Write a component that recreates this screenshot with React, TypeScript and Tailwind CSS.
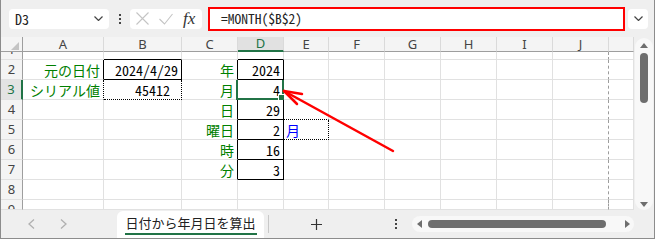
import React from "react";

const cellFont = "font-['Noto_Sans_Mono_CJK_JP','Noto_Sans_CJK_JP',monospace]";
const uiFont = "font-['Noto_Sans','Noto_Sans_CJK_JP',sans-serif]";

const R_GRID = "border-r-[#e1e1e1]";
const B_GRID = "border-b-[#e1e1e1]";
const R_BLACK = "border-r-black";
const B_BLACK = "border-b-black";
const R_DOT = "border-r-black [border-right-style:dotted]!";
const B_DOT = "border-b-black [border-bottom-style:dotted]!";
const R_DASH = "border-r-[#9c9c9c] [border-right-style:dashed]!";

const cols = [
  { key: "A", w: "w-[81px]" },
  { key: "B", w: "w-[78px]" },
  { key: "C", w: "w-[56px]" },
  { key: "D", w: "w-[46px]" },
  { key: "E", w: "w-[45px]" },
  { key: "F", w: "w-[56px]" },
  { key: "G", w: "w-[56px]" },
  { key: "H", w: "w-[56px]" },
  { key: "I", w: "w-[56px]" },
  { key: "J", w: "w-[56px]" },
  { key: "K", w: "w-[25px]" },
];

const rows = [
  { n: 1, h: "h-[8px]", clip: "justify-end" },
  { n: 2, h: "h-[20px]", clip: "justify-center" },
  { n: 3, h: "h-[20px]", clip: "justify-center" },
  { n: 4, h: "h-[20px]", clip: "justify-center" },
  { n: 5, h: "h-[20px]", clip: "justify-center" },
  { n: 6, h: "h-[20px]", clip: "justify-center" },
  { n: 7, h: "h-[20px]", clip: "justify-center" },
  { n: 8, h: "h-[20px]", clip: "justify-center" },
  { n: 9, h: "h-[10px]", clip: "justify-start" },
];

type Cell = {
  text?: string;
  tone?: "green" | "blue";
  left?: boolean;
  pr?: string;
  r?: string;
  b?: string;
  sel?: boolean;
};

const cells: Record<string, Cell> = {
  B1: { b: B_BLACK },
  D1: { b: B_BLACK },
  A2: { text: "元の日付", tone: "green", r: R_BLACK },
  B2: { text: "2024/4/29", r: R_BLACK, b: B_BLACK },
  C2: { text: "年", tone: "green", r: R_BLACK },
  D2: { text: "2024", r: R_BLACK, b: B_BLACK },
  A3: { text: "シリアル値", tone: "green", r: R_DOT },
  B3: { text: "45412", pr: "pr-[11px]", r: R_DOT, b: B_DOT },
  C3: { text: "月", tone: "green", r: R_BLACK },
  D3: { text: "4", r: R_BLACK, b: B_BLACK, sel: true },
  C4: { text: "日", tone: "green", r: R_BLACK },
  D4: { text: "29", r: R_BLACK, b: B_BLACK },
  E4: { b: B_DOT },
  C5: { text: "曜日", tone: "green", r: R_BLACK },
  D5: { text: "2", r: R_BLACK, b: B_BLACK },
  E5: { text: "月", tone: "blue", left: true, r: R_DOT, b: B_DOT },
  C6: { text: "時", tone: "green", r: R_BLACK },
  D6: { text: "16", r: R_BLACK, b: B_BLACK },
  C7: { text: "分", tone: "green", r: R_BLACK },
  D7: { text: "3", r: R_BLACK, b: B_BLACK },
};

function SheetCell({ row, col }: { row: number; col: { key: string; w: string } }) {
  const c = cells[`${col.key}${row}`] ?? {};
  const right = c.r ?? (col.key === "J" ? R_DASH : R_GRID);
  const tone =
    c.tone === "green" ? "text-[#008000]" : c.tone === "blue" ? "text-[#0000ff]" : "text-black";
  const align = c.left ? "justify-start pl-[2px]" : "justify-end " + (c.pr ?? "pr-[3px]");
  return (
    <div
      className={`relative ${col.w} h-full shrink-0 border-r border-b ${right} ${c.b ?? B_GRID} flex items-center ${align} ${tone} text-[14px] leading-none whitespace-nowrap`}
    >
      {c.text}
      {c.sel && (
        <div className="absolute -left-[2px] -top-[2px] -right-[1px] -bottom-[1px] border-2 border-[#217346]">
          <div className="absolute -right-[3px] -bottom-[3px] w-[7px] h-[7px] bg-[#217346] border border-white" />
        </div>
      )}
    </div>
  );
}

function RowHeader({ n, clip }: { n: number; clip: string }) {
  const active = n === 3;
  return (
    <div
      className={`w-[22px] h-full shrink-0 flex flex-col overflow-hidden ${clip} border-b border-b-[#e1e1e1] ${
        active ? "border-r-2 border-r-[#217346] bg-[#e3e3e3] text-[#217346]" : "border-r border-r-[#9e9e9e] bg-[#f4f4f4] text-[#444]"
      }`}
    >
      <div className={`h-[19px] shrink-0 flex items-center justify-center text-[13px] leading-none ${uiFont}`}>{n}</div>
    </div>
  );
}

function Triangle({ dir }: { dir: "up" | "down" | "left" | "right" }) {
  const pts = {
    up: "4,0 8,5 0,5",
    down: "0,0 8,0 4,5",
    left: "5,0 5,8 0,4",
    right: "0,0 5,4 0,8",
  }[dir];
  const vertical = dir === "up" || dir === "down";
  return (
    <svg width={vertical ? 8 : 5} height={vertical ? 5 : 8} className="shrink-0">
      <polygon points={pts} fill="#6e6e6e" />
    </svg>
  );
}

function Dots() {
  return (
    <div className="flex flex-col gap-[2px]">
      <span className="w-[2px] h-[2px] bg-[#444]" />
      <span className="w-[2px] h-[2px] bg-[#444]" />
      <span className="w-[2px] h-[2px] bg-[#444]" />
    </div>
  );
}

function Chevron() {
  return (
    <svg width="9" height="5" className="shrink-0">
      <path d="M0.5 0.5L4.5 4.5L8.5 0.5" stroke="#444" strokeWidth="1.2" fill="none" />
    </svg>
  );
}

export default function App() {
  return (
    <div className={`relative w-[655px] h-[239px] border-x border-b border-[#8c8c8c] bg-[#efefef] flex flex-col overflow-hidden ${uiFont}`}>
      {/* formula bar */}
      <div className="h-[37px] shrink-0 flex items-center pl-[8px]">
        <div className="w-[100px] h-[20px] rounded-[4px] bg-white flex items-center justify-between pl-[6px] pr-[6px]">
          <span className={`text-[14px] leading-none text-[#222] ${cellFont}`}>D3</span>
          <Chevron />
        </div>
        <div className="ml-[10px]">
          <Dots />
        </div>
        <div className="ml-[9px] w-[72px] h-[20px] rounded-[4px] bg-white flex items-center pl-[6px]">
          <svg width="13" height="13" className="shrink-0">
            <path d="M0.5 0.5L12.5 12.5M12.5 0.5L0.5 12.5" stroke="#c4c4c4" strokeWidth="1.1" fill="none" />
          </svg>
          <svg width="14" height="12" className="ml-[10px] shrink-0">
            <path d="M0.5 6L5.5 11L13.5 1" stroke="#c4c4c4" strokeWidth="1.1" fill="none" />
          </svg>
          <span className="ml-[10px] font-['Liberation_Serif',serif] italic text-[17px] leading-none text-[#333]">fx</span>
        </div>
        <div className="ml-[6px] w-[417px] h-[24px] border-2 border-[#ff0000] bg-white flex items-center pl-[11px]">
          <span className={`text-[13.5px] leading-none text-[#222] ${cellFont}`}>=MONTH($B$2)</span>
        </div>
        <div className="ml-[3px] w-[20px] h-[20px] rounded-[4px] bg-white flex items-center justify-center">
          <Chevron />
        </div>
      </div>

      {/* sheet */}
      <div className="h-[173px] shrink-0 flex">
        <div className={`w-[633px] shrink-0 flex flex-col bg-white ${cellFont}`}>
          <div className="h-[15px] shrink-0 flex">
            <div className="w-[22px] h-full shrink-0 bg-[#f4f4f4] border-r border-b border-[#9e9e9e] flex items-end justify-end pr-[3px] pb-[1px]">
              <svg width="8" height="8">
                <polygon points="8,0 8,8 0,8" fill="#c4c4c4" />
              </svg>
            </div>
            {cols.map((col) => (
              <div
                key={col.key}
                className={`${col.w} h-full shrink-0 border-r border-r-[#dadada] flex items-center justify-center text-[13px] leading-none ${uiFont} ${
                  col.key === "D" ? "border-b-2 border-b-[#217346] bg-[#e1e1e1] text-[#217346]" : "border-b border-b-[#9e9e9e] bg-[#f4f4f4] text-[#444]"
                }`}
              >
                {col.key === "K" ? "" : col.key}
              </div>
            ))}
          </div>
          {rows.map((row) => (
            <div key={row.n} className={`${row.h} shrink-0 flex overflow-hidden`}>
              <RowHeader n={row.n} clip={row.clip} />
              {cols.map((col) => (
                <SheetCell key={col.key} row={row.n} col={col} />
              ))}
            </div>
          ))}
        </div>
        {/* vertical scroll */}
        <div className="w-[20px] shrink-0 pl-[1px] pr-[1px] pt-[1px]">
          <div className="h-full rounded-full bg-[#f8f8f8] flex flex-col items-center pt-[5px] pb-[3px]">
            <Triangle dir="up" />
            <div className="mt-[5px] w-[8px] h-[50px] rounded-full bg-[#6e6e6e]" />
            <div className="flex-1" />
            <Triangle dir="down" />
          </div>
        </div>
      </div>

      {/* sheet tabs */}
      <div className="h-[28px] shrink-0 flex items-center">
        <svg width="7" height="10" className="ml-[27px] shrink-0">
          <path d="M6 0.5L1 5L6 9.5" stroke="#b0b0b0" strokeWidth="1.3" fill="none" />
        </svg>
        <svg width="7" height="10" className="ml-[25px] shrink-0">
          <path d="M1 0.5L6 5L1 9.5" stroke="#b0b0b0" strokeWidth="1.3" fill="none" />
        </svg>
        <div className="ml-[50px] w-[147px] h-[27px] self-end rounded-t-[6px] bg-white flex flex-col items-center pt-[4px]">
          <span className="text-[13px] leading-[16px] text-[#222] font-['Noto_Sans_CJK_JP',sans-serif]">日付から年月日を算出</span>
          <span className="mt-[2px] w-[132px] h-[2px] bg-[#217346]" />
        </div>
        <span className="ml-[4px] w-px h-[18px] bg-[#c8c8c8]" />
        <svg width="11" height="11" className="ml-[42px] shrink-0">
          <path d="M5.5 0V11M0 5.5H11" stroke="#333" strokeWidth="1.2" fill="none" />
        </svg>
        <div className="ml-[73px]">
          <Dots />
        </div>
        <div className="ml-[15px] w-[222px] h-[16px] rounded-full bg-[#f8f8f8] flex items-center pl-[5px] pr-[4px]">
          <Triangle dir="left" />
          <div className="ml-[6px] w-[178px] h-[8px] rounded-full bg-[#6e6e6e]" />
          <div className="flex-1" />
          <Triangle dir="right" />
        </div>
      </div>

      {/* red annotation arrow */}
      <svg width="655" height="241" className="absolute -left-px top-0 pointer-events-none">
        <g stroke="#ff0000" strokeWidth="2.5" strokeLinecap="round" fill="none">
          <path d="M393 151L284 91" />
          <path d="M284 91L302 94" />
          <path d="M284 91L297 104" />
        </g>
      </svg>
    </div>
  );
}
